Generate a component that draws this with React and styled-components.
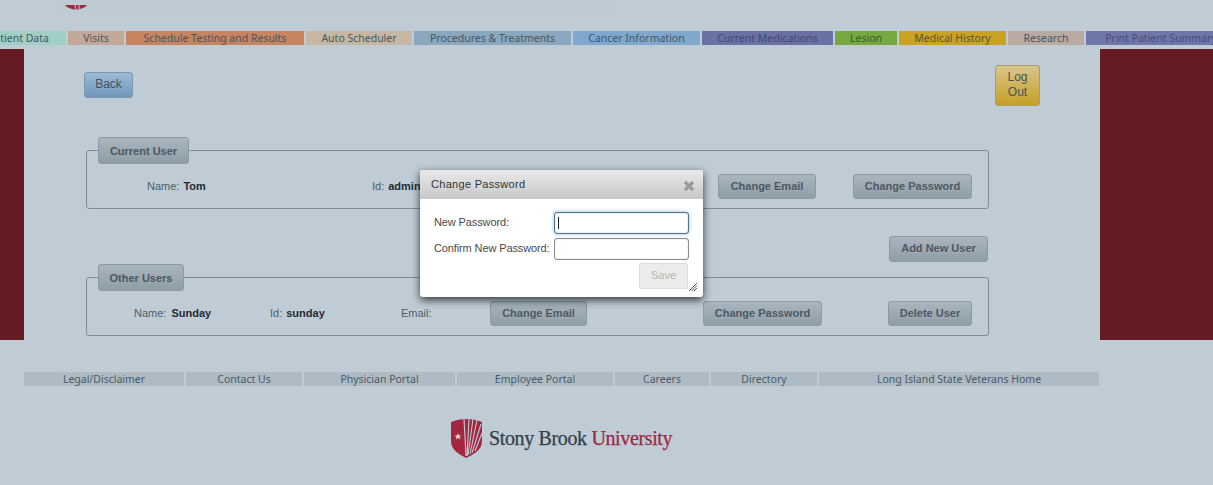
import React from "react";
import styled, { createGlobalStyle } from "styled-components";

const GlobalStyle = createGlobalStyle`
  html, body {
    margin: 0;
    padding: 0;
    background: #c0ccd5;
    overflow: hidden;
  }
`;

const Page = styled.div`
  position: relative;
  width: 1213px;
  height: 485px;
  overflow: hidden;
  background: #c0ccd5;
  font-family: "Liberation Sans", Arial, sans-serif;
  font-size: 11px;
  color: #4a5762;
`;

const Header = styled.header`
  height: 31px;
  padding-left: 55px;
  box-sizing: border-box;
`;

const HeaderBand = styled.div`
  width: 562px;
  height: 10px;
  padding-left: 10px;
  box-sizing: border-box;
  background: #bfcbd3;
`;

const Nav = styled.nav`
  display: flex;
  gap: 2px;
  height: 14px;
  margin-left: -29px;
  width: 1400px;
`;

const Tab = styled.a`
  flex: none;
  width: ${(p) => p.$w}px;
  height: 14px;
  background: ${(p) => p.$bg};
  color: ${(p) => p.$fg || "#465663"};
  font-family: "Noto Sans", sans-serif;
  font-size: 10.5px;
  line-height: 15px;
  text-align: center;
  white-space: nowrap;
  overflow: hidden;
`;

const Main = styled.main`
  display: flex;
  height: 291px;
  margin-top: 4px;
`;

const Side = styled.div`
  flex: none;
  width: ${(p) => p.$w}px;
  background: #661a22;
`;

const Content = styled.div`
  flex: none;
  width: 1076px;
  box-sizing: border-box;
  padding: 16px 60px 0 60px;
`;

const TopRow = styled.div`
  display: flex;
  justify-content: space-between;
  align-items: flex-start;
  height: 85px;
`;

const Button = styled.button`
  box-sizing: border-box;
  height: ${(p) => p.$h || 25}px;
  width: ${(p) => p.$w}px;
  margin: 0;
  padding: 0 0 2px;
  flex: none;
  border: 1px solid #8b9aa4;
  border-radius: 3px;
  background: linear-gradient(#a9b6bf, #8f9da7);
  color: #4b5761;
  font-family: "Liberation Sans", Arial, sans-serif;
  font-size: 11px;
  font-weight: 700;
  text-shadow: 0 1px 0 rgba(255, 255, 255, 0.12);
`;

const BackButton = styled(Button)`
  margin-top: 7px;
  background: linear-gradient(#9dbbd6, #6f97bb);
  border-color: #7b98b2;
  color: #3e4f60;
  font-weight: 400;
  font-size: 12px;
`;

const LogoutButton = styled(Button)`
  background: linear-gradient(#d9c68a, #c5a026);
  border-color: #a99a68;
  color: #4a5055;
  font-weight: 400;
  font-size: 12px;
  line-height: 15px;
`;

const Fieldset = styled.fieldset`
  box-sizing: border-box;
  position: relative;
  width: 903px;
  height: 59px;
  margin: 0 0 0 2px;
  padding: 0;
  border: 1px solid #7e8d98;
  border-radius: 3px;
`;

const Legend = styled.div`
  position: absolute;
  left: 11px;
  top: -14px;
  box-sizing: border-box;
  width: ${(p) => p.$w}px;
  height: 27px;
  border: 1px solid #8b9aa4;
  border-radius: 3px;
  background: linear-gradient(#a9b6bf, #8f9da7);
  color: #4b5761;
  font-weight: 700;
  line-height: 26px;
  text-align: center;
`;

const UserRow = styled.div`
  display: flex;
  align-items: center;
  height: 100%;
  padding: 14px 0 0 ${(p) => p.$pad}px;
  box-sizing: border-box;
`;

const Cell = styled.div`
  flex: none;
  width: ${(p) => p.$w}px;
  margin-top: -2px;
  white-space: nowrap;
`;

const Label = styled.span`
  color: #4f5c67;
  margin-right: ${(p) => p.$gap || 4}px;
`;

const Value = styled.b`
  color: #1f2a33;
`;

const Spaced = styled.div`
  flex: none;
  margin-left: ${(p) => p.$gap}px;
`;

const AddRow = styled.div`
  display: flex;
  justify-content: flex-end;
  margin: 27px 0 15px;
  width: 904px;
`;

const Footer = styled.footer`
  display: flex;
  gap: 2px;
  margin: 32px 0 0 24px;
  height: 14px;
`;

const FooterLink = styled.a`
  flex: none;
  width: ${(p) => p.$w}px;
  height: 14px;
  background: #aebbc4;
  color: #4b5a66;
  font-family: "Noto Sans", sans-serif;
  font-size: 10.5px;
  line-height: 15px;
  text-align: center;
  white-space: nowrap;
`;

const Brand = styled.div`
  display: flex;
  align-items: center;
  gap: 6px;
  margin: 32px 0 0 450px;
  height: 40px;
`;

const BrandName = styled.span`
  font-family: "Liberation Serif", "Times New Roman", serif;
  font-size: 20px;
  letter-spacing: -0.36px;
  -webkit-text-stroke: 0.25px currentColor;
  color: #333f48;
  white-space: nowrap;
`;

const BrandAccent = styled.span`
  color: #9b2743;
`;

const Dialog = styled.div`
  position: absolute;
  left: 420px;
  top: 170px;
  width: 283px;
  height: 127px;
  background: #fff;
  border-radius: 3px;
  box-shadow: 0 3px 8px rgba(20, 25, 30, 0.85);
  overflow: hidden;
  color: #444;
`;

const DialogTitle = styled.div`
  display: flex;
  align-items: center;
  justify-content: space-between;
  box-sizing: border-box;
  height: 29px;
  padding: 0 8px 2px 11px;
  background: linear-gradient(#e9e9e9, #c8c8c8);
  color: #333;
  font-size: 11px;
  letter-spacing: 0.3px;
`;

const CloseIcon = styled.svg`
  width: 12px;
  height: 12px;
  margin-top: 4px;
`;

const DialogBody = styled.div`
  position: relative;
  height: 98px;
  box-sizing: border-box;
  padding: 13px 14px 0;
`;

const FormRow = styled.div`
  display: flex;
  align-items: center;
  justify-content: space-between;
  height: 22px;
  margin-bottom: 4px;
  color: #4a4a4a;
`;

const FieldLabel = styled.label`
  margin-top: -2px;
  white-space: nowrap;
  font-size: 11px;
  letter-spacing: -0.12px;
`;

const InputWrap = styled.div`
  position: relative;
  flex: none;
  width: 135px;
  height: 22px;
`;

const Input = styled.input`
  box-sizing: border-box;
  display: block;
  width: 100%;
  height: 100%;
  margin: 0;
  padding: 0 3px;
  background: #fff;
  border: 1px solid ${(p) => (p.$focus ? "#54748c" : "#8a8a8a")};
  border-radius: 3px;
  outline: none;
  caret-color: transparent;
  box-shadow: ${(p) =>
    p.$focus ? "0 0 4px #8fc0e0, inset 0 0 1px #54748c" : "inset 0 0 1px #999"};
`;

const Caret = styled.span`
  position: absolute;
  left: 4px;
  top: 5px;
  width: 1px;
  height: 12px;
  background: #222;
`;

const SaveRow = styled.div`
  display: flex;
  justify-content: flex-end;
  padding-right: 1px;
`;

const SaveButton = styled.button`
  box-sizing: border-box;
  width: 49px;
  height: 26px;
  margin-top: -1px;
  padding: 0 0 2px;
  background: #ebebeb;
  border: 1px solid #dedede;
  border-radius: 2px;
  color: #b5b5b5;
  font-family: "Liberation Sans", Arial, sans-serif;
  font-size: 11px;
`;

const ResizeGrip = styled.svg`
  position: absolute;
  right: 5px;
  bottom: 5px;
  width: 10px;
  height: 10px;
`;

const tabs = [
  ["Patient Data", 95, "#9fcfc5"],
  ["Visits", 56, "#c2a898"],
  ["Schedule Testing and Results", 178, "#c8835f"],
  ["Auto Scheduler", 106, "#c5b7a3"],
  ["Procedures & Treatments", 157, "#8aa7bd"],
  ["Cancer Information", 127, "#7ea8cd"],
  ["Current Medications", 131, "#6a71a3", "#414a6e"],
  ["Lesion", 62, "#75a83f", "#3a5a30"],
  ["Medical History", 107, "#c9a224", "#5a5430"],
  ["Research", 76, "#b9aaa2"],
  ["Print Patient Summary", 150, "#6f76a8", "#444e78"],
];

const links = [
  ["Legal/Disclaimer", 160],
  ["Contact Us", 116],
  ["Physician Portal", 151],
  ["Employee Portal", 156],
  ["Careers", 94],
  ["Directory", 106],
  ["Long Island State Veterans Home", 280],
];

const Shield = () => (
  <svg width="33" height="40" viewBox="0 0 33 40" aria-hidden="true">
    <path d="M1 4 C10 0 23 0 32 4 V23 C32 32 24 36 16 40 C9 36 1 32 1 23 Z" fill="#a3263f" />
    <path
      d="M16 38 L14 1 M17 38 L19 1 M18 37 L23 1 M20 36 L27 2 M22 35 L31 6 M25 33 L32 15"
      stroke="#c0ccd5"
      strokeWidth="1.1"
      fill="none"
    />
    <path d="M8 15 l1 2.4 2.5 .1 -2 1.6 .8 2.5 -2.3 -1.5 -2.3 1.5 .8 -2.5 -2 -1.6 2.5 -.1 z" fill="#e8d8dc" />
  </svg>
);

export default function App() {
  return (
    <Page>
      <GlobalStyle />
      <Header>
        <HeaderBand>
          <svg width="22" height="5" viewBox="0 0 22 5" aria-hidden="true">
            <path d="M0 0 H22 C20 3 15 4 11 5 C7 4 2 3 0 0 Z" fill="#a3263f" />
            <path d="M10 0 L11 5 M14 0 L14 4" stroke="#c0ccd5" strokeWidth="1" />
          </svg>
        </HeaderBand>
      </Header>

      <Nav>
        {tabs.map(([label, w, bg, fg]) => (
          <Tab key={label} $w={w} $bg={bg} $fg={fg}>
            {label}
          </Tab>
        ))}
      </Nav>

      <Main>
        <Side $w={24} />
        <Content>
          <TopRow>
            <BackButton $w={49} $h={26}>Back</BackButton>
            <LogoutButton $w={45} $h={41}>
              Log
              <br />
              Out
            </LogoutButton>
          </TopRow>

          <Fieldset>
            <Legend $w={91}>Current User</Legend>
            <UserRow $pad={60}>
              <Cell $w={225}>
                <Label>Name:</Label>
                <Value>Tom</Value>
              </Cell>
              <Cell $w={346}>
                <Label>Id:</Label>
                <Value>admin</Value>
              </Cell>
              <Button $w={98}>Change Email</Button>
              <Spaced $gap={37}>
                <Button $w={119}>Change Password</Button>
              </Spaced>
            </UserRow>
          </Fieldset>

          <AddRow>
            <Button $w={99} $h={26}>Add New User</Button>
          </AddRow>

          <Fieldset>
            <Legend $w={86}>Other Users</Legend>
            <UserRow $pad={47}>
              <Cell $w={136}>
                <Label $gap={5}>Name:</Label>
                <Value>Sunday</Value>
              </Cell>
              <Cell $w={131}>
                <Label>Id:</Label>
                <Value>sunday</Value>
              </Cell>
              <Cell $w={89}>
                <Label>Email:</Label>
              </Cell>
              <Button $w={97}>Change Email</Button>
              <Spaced $gap={116}>
                <Button $w={119}>Change Password</Button>
              </Spaced>
              <Spaced $gap={66}>
                <Button $w={84}>Delete User</Button>
              </Spaced>
            </UserRow>
          </Fieldset>
        </Content>
        <Side $w={113} />
      </Main>

      <Footer>
        {links.map(([label, w]) => (
          <FooterLink key={label} $w={w}>
            {label}
          </FooterLink>
        ))}
      </Footer>

      <Brand>
        <Shield />
        <BrandName>
          Stony Brook <BrandAccent>University</BrandAccent>
        </BrandName>
      </Brand>

      <Dialog>
        <DialogTitle>
          Change Password
          <CloseIcon viewBox="0 0 12 12" aria-hidden="true">
            <path d="M2 2 L10 10 M10 2 L2 10" stroke="#9a9a9a" strokeWidth="3.2" />
          </CloseIcon>
        </DialogTitle>
        <DialogBody>
          <FormRow>
            <FieldLabel>New Password:</FieldLabel>
            <InputWrap>
              <Input $focus type="password" readOnly />
              <Caret />
            </InputWrap>
          </FormRow>
          <FormRow>
            <FieldLabel>Confirm New Password:</FieldLabel>
            <InputWrap>
              <Input type="password" readOnly />
            </InputWrap>
          </FormRow>
          <SaveRow>
            <SaveButton disabled>Save</SaveButton>
          </SaveRow>
          <ResizeGrip viewBox="0 0 10 10" aria-hidden="true">
            <path d="M9 1 L1 9 M9 3.5 L3.5 9 M9 6 L6 9" stroke="#555" strokeWidth="1" />
          </ResizeGrip>
        </DialogBody>
      </Dialog>
    </Page>
  );
}
